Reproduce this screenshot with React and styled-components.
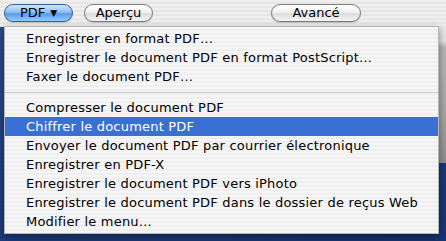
import React from "react";
import styled, { createGlobalStyle } from "styled-components";

const GlobalStyle = createGlobalStyle`
  html, body {
    margin: 0;
    padding: 0;
    background: #1d3b7c;
  }
  body {
    font-family: "DejaVu Sans", "Lucida Grande", sans-serif;
  }
`;

const Desktop = styled.div`
  position: relative;
  width: 446px;
  height: 241px;
  overflow: hidden;
  display: flex;
  flex-direction: column;
  background: linear-gradient(160deg, #2c4f93 0%, #1f3f82 45%, #173471 100%);
`;

const Toolbar = styled.div`
  height: 27px;
  flex: none;
  display: flex;
  align-items: flex-start;
  padding: 4px 0 0 4px;
  box-sizing: border-box;
  background: repeating-linear-gradient(
    to bottom,
    #efefef 0,
    #efefef 2px,
    #e6e6e6 2px,
    #e6e6e6 4px
  );
`;

const PillButton = styled.button`
  height: 18px;
  width: ${({ $width }) => $width}px;
  margin-left: ${({ $gap }) => $gap}px;
  padding: 0;
  border-radius: 9px;
  font-family: inherit;
  font-size: 13px;
  line-height: 16px;
  color: #000;
  display: flex;
  align-items: center;
  justify-content: center;
  gap: 5px;
  border: 1px solid ${({ $primary }) => ($primary ? "#3f5f9a" : "#7d7d7d")};
  background: ${({ $primary }) =>
    $primary
      ? "linear-gradient(to bottom, #cfe5fb 0%, #8fc0f0 45%, #5a9be6 55%, #8fd0ff 100%)"
      : "linear-gradient(to bottom, #ffffff 0%, #f1f1f1 45%, #dcdcdc 55%, #f6f6f6 100%)"};
  box-shadow: 0 1px 1px rgba(0, 0, 0, 0.15);
`;

const Arrow = styled.span`
  font-size: 9px;
  line-height: 1;
`;

const Body = styled.div`
  flex: 1;
  display: flex;
  justify-content: flex-end;
  align-items: flex-start;
`;

const WindowEdge = styled.div`
  width: 8px;
  height: 136px;
  background: linear-gradient(
    to bottom,
    #e8e8e8 0,
    #e8e8e8 14px,
    #b9b9b9 20px,
    #a9a9a9 60%,
    #8f8f8f 100%
  );
`;

const Menu = styled.ul`
  position: absolute;
  left: 4px;
  top: 26px;
  width: 435px;
  margin: 0;
  padding: 2px 0 2px;
  list-style: none;
  box-sizing: border-box;
  border: 1px solid #b5b5b5;
  background: repeating-linear-gradient(
    to bottom,
    #f6f6f6 0,
    #f6f6f6 2px,
    #efefef 2px,
    #efefef 4px
  );
  box-shadow: 0 3px 8px rgba(0, 0, 0, 0.45);
`;

const Item = styled.li`
  height: 19px;
  line-height: 19px;
  padding-left: 21px;
  font-size: 13px;
  letter-spacing: 0.2px;
  white-space: nowrap;
  color: ${({ $active }) => ($active ? "#fff" : "#000")};
  background: ${({ $active }) => ($active ? "#3a70d3" : "transparent")};
`;

const Separator = styled.li`
  height: 12px;
  display: flex;
  align-items: center;
  &::after {
    content: "";
    flex: 1;
    height: 1px;
    background: #cfcfcf;
  }
`;

const items = [
  "Enregistrer en format PDF…",
  "Enregistrer le document PDF en format PostScript…",
  "Faxer le document PDF…",
  null,
  "Compresser le document PDF",
  "Chiffrer le document PDF",
  "Envoyer le document PDF par courrier électronique",
  "Enregistrer en PDF-X",
  "Enregistrer le document PDF vers iPhoto",
  "Enregistrer le document PDF dans le dossier de reçus Web",
  "Modifier le menu…",
];

export default function App() {
  return (
    <Desktop>
      <GlobalStyle />
      <Toolbar>
        <PillButton $primary $width={69} $gap={0}>
          PDF <Arrow>▼</Arrow>
        </PillButton>
        <PillButton $width={69} $gap={11}>
          Aperçu
        </PillButton>
        <PillButton $width={90} $gap={118}>
          Avancé
        </PillButton>
      </Toolbar>
      <Body>
        <WindowEdge />
      </Body>
      <Menu>
        {items.map((label, i) =>
          label ? (
            <Item key={i} $active={label === "Chiffrer le document PDF"}>
              {label}
            </Item>
          ) : (
            <Separator key={i} />
          )
        )}
      </Menu>
    </Desktop>
  );
}
